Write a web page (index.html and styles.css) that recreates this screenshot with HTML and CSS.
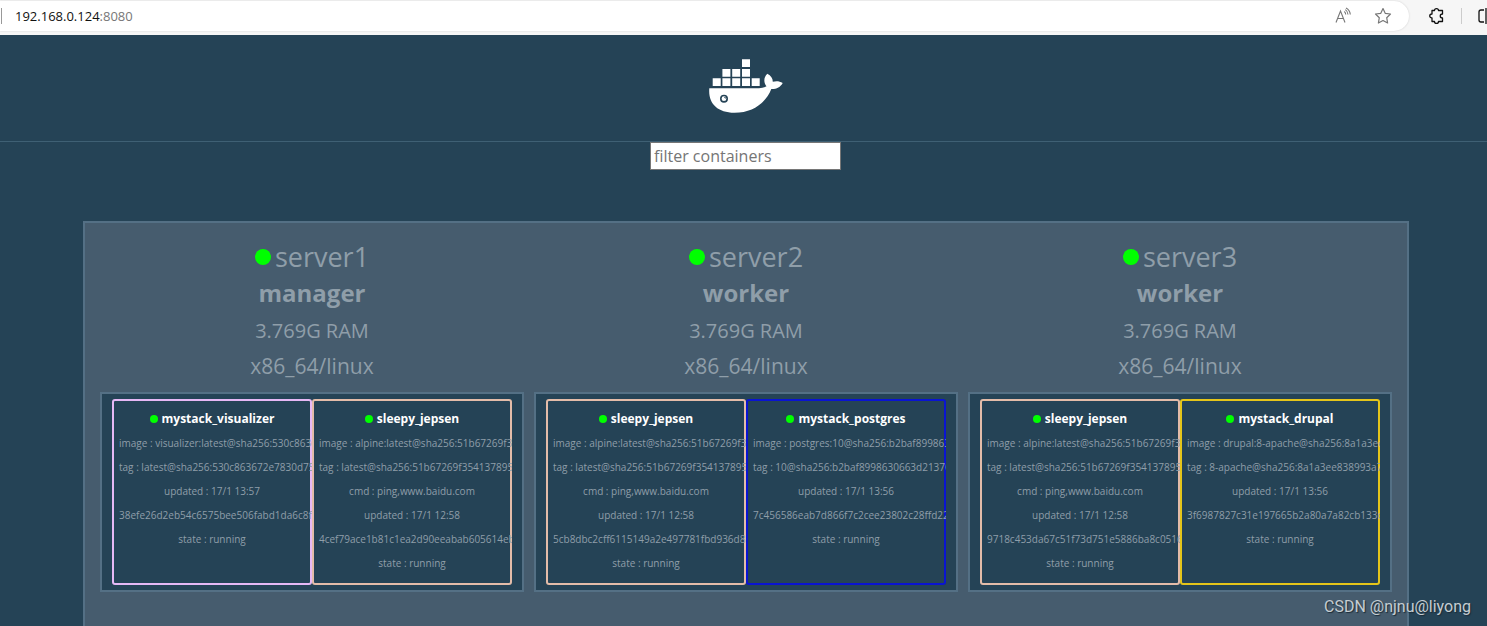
FILE: index.html
```
<!DOCTYPE html>
<html lang="en">
<head>
<meta charset="utf-8">
<title>Visualizer</title>
<link rel="stylesheet" href="styles.css">
</head>
<body>
<div class="toolbar">
  <div class="address">
    <span class="url">192.168.0.124<span class="port">:8080</span></span>
    <button class="tool" aria-label="Read aloud"><svg width="18" height="18" viewBox="0 0 18 18" fill="none" stroke="#777" stroke-width="1.1"><path d="M2 15.500 6.500 4 11 15.500M3.500 11.500H9.500M10.300 4.500Q11.600 5.500 11.700 7.500M11.300 2.600Q13.800 4.200 14 7.500M12 .900Q16 3 16.300 7.500"/></svg></button>
    <button class="tool" aria-label="Add to favorites"><svg width="18" height="18" viewBox="0 0 18 18" fill="none" stroke="#777" stroke-width="1.200" stroke-linejoin="round"><path d="M9 1.500 11.200 6.300 16.500 7 12.700 10.700 13.600 16 9 13.500 4.400 16 5.300 10.700 1.500 7 6.800 6.300Z"/></svg></button>
  </div>
  <button class="tool" aria-label="Extensions"><svg width="18" height="18" viewBox="0 0 18 18" fill="none" stroke="#111" stroke-width="1.300" stroke-linejoin="round"><path d="M4 3.500H6.500C6.500 .900 10.500 .900 10.500 3.500H14.500V7C11.500 7 11.500 11 14.500 11V14.500H10.500C10.500 17.100 6.500 17.100 6.500 14.500H4V11C1 11 1 7 4 7Z"/></svg></button>
  <span class="divider"></span>
  <button class="tool" aria-label="Split screen"><svg width="18" height="18" viewBox="0 0 18 18" fill="none" stroke="#111" stroke-width="1.300"><path d="M7 3H4Q2 3 2 5V13Q2 15 4 15H7M9 1V17M12 3H14Q16 3 16 5V13Q16 15 14 15H12"/></svg></button>
</div>
<div class="page">
  <header class="header">
    <svg class="whale" width="74" height="54" viewBox="0 0 74 54" role="img" aria-label="Docker">
      <g fill="#fff">
        <path d="M33 .300h8v7.700h-8zM13.400 10h8v7.700h-8zM23.200 10h8v7.700h-8zM33 10h8v7.700h-8zM3.700 19.200h8v7.700h-8zM13.400 19.200h8v7.700h-8zM23.200 19.200h8v7.700h-8zM33 19.200h8v7.700h-8zM42.700 19.200h8v7.700h-8z"/>
        <path d="M.300 29.200H48C52 29.200 55 28.500 57.500 27.200C54.500 23.500 54.500 18.500 58.300 14.800C62 16.500 63.800 19.500 63.800 22.800C67 21.800 70.500 22 73.700 23.900C71.500 28 67.500 30.200 62.300 30C57.500 42.500 45 53.700 25.500 53.700C8 53.700-1 44 .300 29.200Z"/>
      </g>
      <circle cx="15" cy="39.700" r="3.200" fill="#fff" stroke="#254356" stroke-width="1.600"/>
      <path d="M15 38.200 16.600 37.800V40Z" fill="#254356"/>
    </svg>
  </header>
  <input class="filter" type="text" placeholder="filter containers" aria-label="filter containers">
  <main class="cluster">
    <section class="node">
      <div class="name"><i class="dot"></i>server1</div>
      <div class="role">manager</div>
      <div class="memory">3.769G RAM</div>
      <div class="arch">x86_64/linux</div>
      <div class="tasks">
        <article class="task violet">
          <h3><i class="dot"></i>mystack_visualizer</h3>
          <p>image : visualizer:latest@sha256:530c863672e7830d7560</p>
          <p>tag : latest@sha256:530c863672e7830d7560483df66</p>
          <p>updated : 17/1 13:57</p>
          <p>38efe26d2eb54c6575bee506fabd1da6c8f1d2</p>
          <p>state : running</p>
        </article>
        <article class="task peach">
          <h3><i class="dot"></i>sleepy_jepsen</h3>
          <p>image : alpine:latest@sha256:51b67269f354137895</p>
          <p>tag : latest@sha256:51b67269f354137895d43f3b3d</p>
          <p>cmd : ping,www.baidu.com</p>
          <p>updated : 17/1 12:58</p>
          <p>4cef79ace1b81c1ea2d90eeabab605614eb2f1</p>
          <p>state : running</p>
        </article>
      </div>
    </section>
    <section class="node">
      <div class="name"><i class="dot"></i>server2</div>
      <div class="role">worker</div>
      <div class="memory">3.769G RAM</div>
      <div class="arch">x86_64/linux</div>
      <div class="tasks">
        <article class="task peach">
          <h3><i class="dot"></i>sleepy_jepsen</h3>
          <p>image : alpine:latest@sha256:51b67269f354137895</p>
          <p>tag : latest@sha256:51b67269f354137895d43f3b3d</p>
          <p>cmd : ping,www.baidu.com</p>
          <p>updated : 17/1 12:58</p>
          <p>5cb8dbc2cff6115149a2e497781fbd936d8a20</p>
          <p>state : running</p>
        </article>
        <article class="task blue">
          <h3><i class="dot"></i>mystack_postgres</h3>
          <p>image : postgres:10@sha256:b2baf8998630663d2137</p>
          <p>tag : 10@sha256:b2baf8998630663d21370c21</p>
          <p>updated : 17/1 13:56</p>
          <p>7c456586eab7d866f7c2cee23802c28ffd22a1</p>
          <p>state : running</p>
        </article>
      </div>
    </section>
    <section class="node">
      <div class="name"><i class="dot"></i>server3</div>
      <div class="role">worker</div>
      <div class="memory">3.769G RAM</div>
      <div class="arch">x86_64/linux</div>
      <div class="tasks">
        <article class="task peach">
          <h3><i class="dot"></i>sleepy_jepsen</h3>
          <p>image : alpine:latest@sha256:51b67269f354137895</p>
          <p>tag : latest@sha256:51b67269f354137895d43f3b3d</p>
          <p>cmd : ping,www.baidu.com</p>
          <p>updated : 17/1 12:58</p>
          <p>9718c453da67c51f73d751e5886ba8c0516e20</p>
          <p>state : running</p>
        </article>
        <article class="task gold">
          <h3><i class="dot"></i>mystack_drupal</h3>
          <p>image : drupal:8-apache@sha256:8a1a3ee838993a7</p>
          <p>tag : 8-apache@sha256:8a1a3ee838993a7c21</p>
          <p>updated : 17/1 13:56</p>
          <p>3f6987827c31e197665b2a80a7a82cb133c4a2</p>
          <p>state : running</p>
        </article>
      </div>
    </section>
  </main>
</div>
<div class="credit">CSDN @njnu@liyong</div>
</body>
</html>
```
FILE: styles.css
```
* { box-sizing: border-box; }

body {
  margin: 0;
  height: 100vh;
  overflow: hidden;
  display: flex;
  flex-direction: column;
  background: #254356;
  color: #8f9ea9;
  font-family: "Open Sans", sans-serif;
}

h3, p { margin: 0; }

/* Browser toolbar */
.toolbar {
  flex: none;
  height: 35px;
  padding: 1px 0 4px;
  display: flex;
  align-items: center;
  overflow: hidden;
  background: #f6f6f6;
}
.address {
  flex: 1;
  height: 30px;
  padding-right: 17px;
  display: flex;
  align-items: center;
  gap: 22px;
  background: #fff;
  border-radius: 0 15px 15px 0;
  box-shadow: 0 0 2px #ccc;
}
.url {
  flex: 1;
  padding-left: 13px;
  border-left: 1px solid #999;
  margin-left: 1px;
  font-size: 13px;
  line-height: 16px;
  color: #111;
}
.port { color: #777; }
.tool {
  flex: none;
  width: 18px;
  height: 18px;
  padding: 0;
  border: 0;
  background: none;
}
.tool svg { display: block; }
.address + .tool { margin-left: 19px; }
.divider {
  width: 1px;
  height: 16px;
  margin: 0 15px;
  background: #ccc;
}
.divider + .tool { margin-right: -8px; }

/* Page */
.page {
  flex: 1;
  display: flex;
  flex-direction: column;
  align-items: center;
}
.header {
  width: 100%;
  height: 107px;
  padding: 24px 0 0 5px;
  border-bottom: 1px solid #3f6074;
  text-align: center;
}
.filter {
  width: 191px;
  height: 28px;
  margin-left: 4px;
  padding: 0 3px;
  border: 1px solid #767676;
  background: #fff;
  font: 16px/24px "Open Sans", sans-serif;
}
.filter::placeholder { color: #757575; }

.cluster {
  flex: 1;
  margin: 51px 0 0 5px;
  padding: 15px 15px 0;
  display: flex;
  gap: 10px;
  background: #465c6e;
  border: 2px solid #547085;
  border-bottom: 0;
}
.node { text-align: center; }
.dot {
  display: inline-block;
  border-radius: 50%;
  background: #0f0;
}
.name {
  display: flex;
  align-items: center;
  justify-content: center;
  gap: 4px;
  font-size: 27px;
  line-height: 38px;
}
.name .dot { width: 16px; height: 16px; }
.role {
  font-size: 24px;
  font-weight: 700;
  line-height: 34px;
}
.memory {
  margin-top: 3px;
  font-size: 20px;
  line-height: 36px;
}
.arch {
  font-size: 21px;
  line-height: 34px;
}
.tasks {
  margin-top: 9px;
  padding: 5px 10px;
  display: flex;
  background: #254356;
  border: 2px solid #547085;
}

/* The inset shadow acts as the frame, so long lines run over it */
.task {
  width: 200px;
  height: 186px;
  padding: 7px;
  overflow: hidden;
  border-radius: 3px;
  box-shadow: inset 0 0 0 2px currentColor;
  white-space: nowrap;
}
.violet { color: #e6b8f5; }
.peach { color: #e3bca9; }
.blue { color: #0a14d2; }
.gold { color: #e5c51a; }
.task h3 {
  display: flex;
  align-items: center;
  justify-content: center;
  gap: 4px;
  color: #fff;
  font-size: 12px;
  line-height: 25px;
}
.task .dot { width: 8px; height: 8px; }
.task p {
  color: #8f9ea9;
  font-size: 10px;
  line-height: 24px;
}

.credit {
  position: absolute;
  right: 16px;
  bottom: 7px;
  color: #c5cdd2;
  font: 16px/24px Roboto, sans-serif;
  text-shadow: 1px 1px 1px #1c2c38;
}
```
